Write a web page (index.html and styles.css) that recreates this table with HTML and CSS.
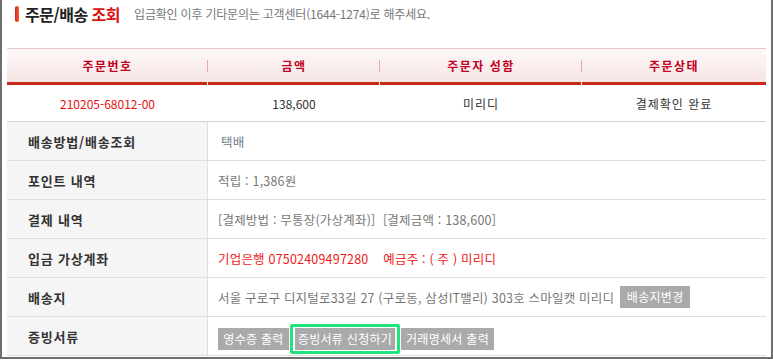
FILE: index.html
```html
<!DOCTYPE html>
<html lang="ko">
<head>
<meta charset="utf-8">
<title>주문/배송 조회</title>
<link rel="stylesheet" href="styles.css">
</head>
<body>
<div class="frame">
  <div class="title-bar">
    <span class="mark"></span>
    <h2 class="title">주문/배송 <em>조회</em></h2>
    <p class="notice">입금확인 이후 기타문의는 고객센터(1644-1274)로 해주세요.</p>
  </div>

  <div class="order-head">
    <div class="th">주문번호</div>
    <div class="th">금액</div>
    <div class="th">주문자 성함</div>
    <div class="th last">주문상태</div>
    <div class="td order-no">210205-68012-00</div>
    <div class="td">138,600</div>
    <div class="td wide">미리디</div>
    <div class="td wide">결제확인 완료</div>
  </div>

  <div class="details">
    <div class="row">
      <div class="label">배송방법/배송조회</div>
      <div class="value"><span class="courier">택배</span></div>
    </div>
    <div class="row">
      <div class="label">포인트 내역</div>
      <div class="value">적립 : 1,386원</div>
    </div>
    <div class="row">
      <div class="label">결제 내역</div>
      <div class="value">[결제방법 : 무통장(가상계좌)]&nbsp;&nbsp;[결제금액 : 138,600]</div>
    </div>
    <div class="row">
      <div class="label">입금 가상계좌</div>
      <div class="value account">기업은행 07502409497280&nbsp;&nbsp;&nbsp; 예금주 : ( 주 ) 미리디</div>
    </div>
    <div class="row">
      <div class="label">배송지</div>
      <div class="value address">서울 구로구 디지털로33길 27 (구로동, 삼성IT밸리) 303호 스마일캣 미리디 <button class="btn btn-addr" type="button">배송지변경</button></div>
    </div>
    <div class="row">
      <div class="label">증빙서류</div>
      <div class="value docs">
        <button class="btn btn-receipt" type="button">영수증 출력</button>
        <span class="focus-ring"><button class="btn btn-proof" type="button">증빙서류 신청하기</button></span>
        <button class="btn btn-statement" type="button">거래명세서 출력</button>
      </div>
    </div>
  </div>
</div>
</body>
</html>
```

FILE: styles.css
```css
* {
  box-sizing: border-box;
}

html, body {
  margin: 0;
  padding: 0;
  background: #fff;
}

body {
  font-family: "Noto Sans CJK KR", "Noto Sans", sans-serif;
  font-size: 12px;
  color: #333;
}

.frame {
  width: 773px;
  height: 359px;
  border: 2px solid #6e6e6e;
  border-top: 0;
  padding: 0 5px;
  overflow: hidden;
}

/* page title */
.title-bar {
  display: flex;
  align-items: center;
  height: 48px;
  padding-bottom: 21px;
}

.mark {
  width: 4px;
  height: 16px;
  margin-left: 8px;
  border-radius: 2px;
  background: linear-gradient(90deg, #d8230e, #f2643a);
}

.title {
  margin: 0 0 0 6px;
  font-size: 16px;
  font-weight: bold;
  letter-spacing: -0.5px;
  color: #222;
  line-height: 20px;
}

.title em {
  font-style: normal;
  color: #e0100e;
}

.notice {
  margin: 0 0 0 14px;
  font-size: 12px;
  letter-spacing: -0.2px;
  color: #777;
  line-height: 16px;
}

/* order summary */
.order-head {
  display: grid;
  grid-template-columns: 201px 172px 202px 184px;
  border-top: 1px solid #e8c6c6;
}

.th {
  height: 37px;
  display: flex;
  align-items: center;
  justify-content: center;
  padding-bottom: 4px;
  font-size: 12px;
  font-weight: bold;
  letter-spacing: 1.5px;
  color: #c20020;
  background:
    linear-gradient(#f2a4a4, #f2a4a4) right 0 top 11px / 1px 12px no-repeat,
    linear-gradient(#c52a18, #c52a18) left 0 bottom 1px / calc(100% - 1px) 3px no-repeat,
    linear-gradient(#fdf9f9, #f6e3e3) left top / 100% 34px no-repeat;
}

.th.last {
  background:
    linear-gradient(#c52a18, #c52a18) left 0 bottom 1px / 100% 3px no-repeat,
    linear-gradient(#fdf9f9, #f6e3e3) left top / 100% 34px no-repeat;
}

.td {
  height: 35px;
  display: flex;
  align-items: center;
  justify-content: center;
  font-size: 12px;
  color: #333;
}

.td.wide {
  letter-spacing: 1px;
}

.order-no {
  color: #e8100e;
}

/* detail rows */
.details {
  border-top: 1px solid #cfcfcf;
}

.row {
  display: flex;
  height: 39px;
  border-bottom: 1px solid #dedede;
}

.label {
  width: 201px;
  flex: none;
  display: flex;
  align-items: center;
  padding-left: 21px;
  background: #f5f5f5;
  border-right: 1px solid #dedede;
  font-size: 13px;
  font-weight: bold;
  letter-spacing: 0.8px;
  color: #333;
}

.value {
  flex: 1;
  display: flex;
  align-items: center;
  padding-left: 10px;
  font-size: 12.5px;
  letter-spacing: 0.2px;
  color: #777;
  white-space: nowrap;
}

.courier {
  margin-left: 3px;
  color: #6f7d8c;
}

.account {
  color: #f01818;
}

.docs {
  padding-top: 6px;
  gap: 6px;
}

.btn {
  height: 22px;
  padding: 0;
  border: 0;
  background: #aaa;
  color: #fff;
  font-family: inherit;
  font-size: 12px;
  line-height: 22px;
  text-align: center;
  letter-spacing: 0.3px;
}

.btn-addr {
  width: 70px;
  margin-left: 6px;
}

.btn-receipt {
  width: 71px;
}

.btn-proof {
  width: 100px;
}

.btn-statement {
  width: 93px;
}

.focus-ring {
  display: inline-flex;
  margin: -4px -5px;
  padding: 1px 2px;
  border: 3px solid #22e47a;
  border-radius: 2px;
}
```
